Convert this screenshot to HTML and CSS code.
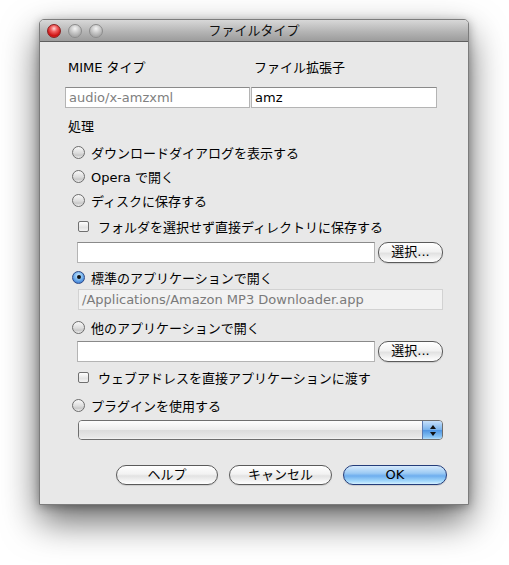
FILE: index.html
```html
<!DOCTYPE html>
<html lang="ja">
<head>
<meta charset="utf-8">
<title>ファイルタイプ</title>
<link rel="stylesheet" href="styles.css">
</head>
<body>
<div class="window">
  <div class="titlebar">
    <div class="lights">
      <span class="light red"></span>
      <span class="light gray"></span>
      <span class="light gray"></span>
    </div>
    <div class="title">ファイルタイプ</div>
  </div>
  <div class="content">
    <div class="labels">
      <span class="lbl-mime">MIME タイプ</span>
      <span class="lbl-ext">ファイル拡張子</span>
    </div>
    <div class="fields">
      <div class="field mime">audio/x-amzxml</div>
      <div class="field ext">amz</div>
    </div>
    <div class="section">処理</div>
    <div class="opt r1"><span class="radio"></span><span>ダウンロードダイアログを表示する</span></div>
    <div class="opt"><span class="radio"></span><span>Opera で開く</span></div>
    <div class="opt"><span class="radio"></span><span>ディスクに保存する</span></div>
    <div class="chk c1"><span class="box"></span><span>フォルダを選択せず直接ディレクトリに保存する</span></div>
    <div class="browse b1"><div class="field wide"></div><div class="btn small">選択...</div></div>
    <div class="opt r4"><span class="radio on"></span><span>標準のアプリケーションで開く</span></div>
    <div class="field path">/Applications/Amazon MP3 Downloader.app</div>
    <div class="opt r5"><span class="radio"></span><span>他のアプリケーションで開く</span></div>
    <div class="browse b2"><div class="field wide"></div><div class="btn small">選択...</div></div>
    <div class="chk c2"><span class="box"></span><span>ウェブアドレスを直接アプリケーションに渡す</span></div>
    <div class="opt r6"><span class="radio"></span><span>プラグインを使用する</span></div>
    <div class="popup"><div class="popup-body"></div><div class="stepper"><span class="up"></span><span class="down"></span></div></div>
    <div class="buttons">
      <div class="btn b-help">ヘルプ</div>
      <div class="btn b-cancel">キャンセル</div>
      <div class="btn b-ok">OK</div>
    </div>
  </div>
</div>
</body>
</html>
```

FILE: styles.css
```css
html, body {
  margin: 0;
  padding: 0;
  background: #ffffff;
}
body {
  width: 509px;
  height: 565px;
  overflow: hidden;
  font-family: "DejaVu Sans", "Noto Sans CJK JP", sans-serif;
  font-size: 13px;
  color: #000;
}
.window {
  margin: 19px 0 0 39px;
  width: 428px;
  border: 1px solid #7c7c7c;
  border-radius: 5px 5px 0 0;
  background: #e8e8e8;
  box-shadow: 0 16px 36px rgba(0,0,0,0.6), 0 2px 10px rgba(0,0,0,0.3);
}
.titlebar {
  height: 21px;
  border-bottom: 1px solid #5f5f5f;
  border-radius: 4px 4px 0 0;
  background: linear-gradient(#d8d8d8, #b2b2b2 60%, #9c9c9c);
  display: flex;
  align-items: center;
  position: relative;
}
.lights {
  display: flex;
  gap: 7px;
  margin-left: 7px;
}
.light {
  width: 14px;
  height: 14px;
  border-radius: 50%;
  box-sizing: border-box;
}
.light.red {
  background: radial-gradient(circle at 50% 30%, #ffd8d8 0, #f26262 30%, #cc1010 70%, #e84444 100%);
  border: 1px solid #8a2020;
}
.light.gray {
  background: radial-gradient(circle at 50% 30%, #f4f4f4 0, #cacaca 40%, #a8a8a8 75%, #c4c4c4 100%);
  border: 1px solid #8c8c8c;
}
.title {
  position: absolute;
  left: 0;
  right: 0;
  top: 0;
  line-height: 21px;
  text-align: center;
  font-size: 13px;
  color: #111;
  pointer-events: none;
}
.content {
  display: flex;
  flex-direction: column;
  padding-bottom: 19px;
}
.labels {
  margin-top: 18px;
  height: 16px;
  line-height: 16px;
  display: flex;
  padding-left: 28px;
}
.lbl-mime { width: 186px; }
.fields {
  margin-top: 11px;
  display: flex;
  padding-left: 25px;
  gap: 1px;
}
.field {
  box-sizing: border-box;
  height: 21px;
  background: #fff;
  border: 1px solid #b4b4b4;
  border-top-color: #8a8a8a;
  padding: 0 3px;
  line-height: 19px;
  white-space: nowrap;
  overflow: hidden;
}
.field.mime { width: 185px; color: #808080; }
.field.ext { width: 186px; }
.section {
  margin-top: 11px;
  height: 16px;
  line-height: 16px;
  padding-left: 28px;
}
.opt {
  height: 24px;
  display: flex;
  align-items: center;
  gap: 6px;
  padding-left: 32px;
}
.opt.r1 { margin-top: 5px; }
.opt.r4 { margin-top: 2px; }
.opt.r5 { margin-top: 5px; }
.opt.r6 { margin-top: 4px; }
.radio {
  width: 13px;
  height: 13px;
  box-sizing: border-box;
  border-radius: 50%;
  border: 1px solid #6c6c6c;
  background: linear-gradient(#f8f8f8, #dcdcdc 55%, #c8c8c8 75%, #f0f0f0);
  flex: none;
  position: relative;
}
.radio.on {
  border-color: #2e4a86;
  background: radial-gradient(circle at 50% 35%, #d4ecff 0, #7ab6ee 45%, #3f7fd6 80%, #8ec8f8 100%);
}
.radio.on::after {
  content: "";
  position: absolute;
  left: 3.5px;
  top: 3.5px;
  width: 4px;
  height: 4px;
  border-radius: 50%;
  background: #111;
}
.chk {
  height: 24px;
  display: flex;
  align-items: center;
  gap: 9px;
  padding-left: 38px;
}
.chk.c1 { margin-top: 2px; }
.chk.c2 { margin-top: 3px; }
.box {
  width: 11px;
  height: 11px;
  box-sizing: border-box;
  border: 1px solid #707070;
  border-radius: 2px;
  background: linear-gradient(#ffffff, #e4e4e4 60%, #f4f4f4);
  flex: none;
}
.browse {
  display: flex;
  align-items: center;
  gap: 3px;
  padding-left: 37px;
}
.browse.b1 { margin-top: 4px; }
.browse.b2 { margin-top: 2px; }
.field.wide { width: 298px; }
.field.path {
  margin-left: 38px;
  width: 365px;
  background: #f2f2f2;
  border-color: #d2d2d2;
  color: #7a7a7a;
}
.btn {
  box-sizing: border-box;
  height: 20px;
  border: 1px solid #5a5a5a;
  border-radius: 10px;
  background: linear-gradient(#ffffff, #f2f2f2 45%, #e2e2e2 55%, #f6f6f6 85%, #ffffff);
  text-align: center;
  line-height: 18px;
  font-size: 13px;
  box-shadow: 0 1px 1px rgba(0,0,0,0.12);
}
.btn.small { width: 65px; height: 21px; }
.popup {
  margin: 3px 0 0 38px;
  width: 365px;
  height: 20px;
  box-sizing: border-box;
  display: flex;
  border: 1px solid #6e6e6e;
  border-radius: 4px;
  overflow: hidden;
}
.popup-body {
  flex: 1;
  background: linear-gradient(#fdfdfd, #ececec 50%, #dcdcdc 52%, #e8e8e8 90%, #f4f4f4);
}
.stepper {
  width: 19px;
  border-left: 1px solid #5c7ab0;
  background: linear-gradient(#c6e0fb, #78b2ec 50%, #4f95e2 52%, #8ac6f6 90%, #b8e0fc);
  display: flex;
  flex-direction: column;
  align-items: center;
  justify-content: center;
  gap: 3px;
}
.up, .down {
  width: 0;
  height: 0;
  border-left: 3px solid transparent;
  border-right: 3px solid transparent;
}
.up { border-bottom: 4px solid #111; }
.down { border-top: 4px solid #111; }
.buttons {
  margin-top: 25px;
  display: flex;
  gap: 11px;
  padding-left: 76px;
}
.b-help { width: 102px; }
.b-cancel { width: 103px; }
.b-ok {
  width: 104px;
  border-color: #243d7a;
  background: linear-gradient(#d6eafc, #9ccaf4 40%, #6eaeee 55%, #a6dafc 85%, #d4f0ff);
}
```
